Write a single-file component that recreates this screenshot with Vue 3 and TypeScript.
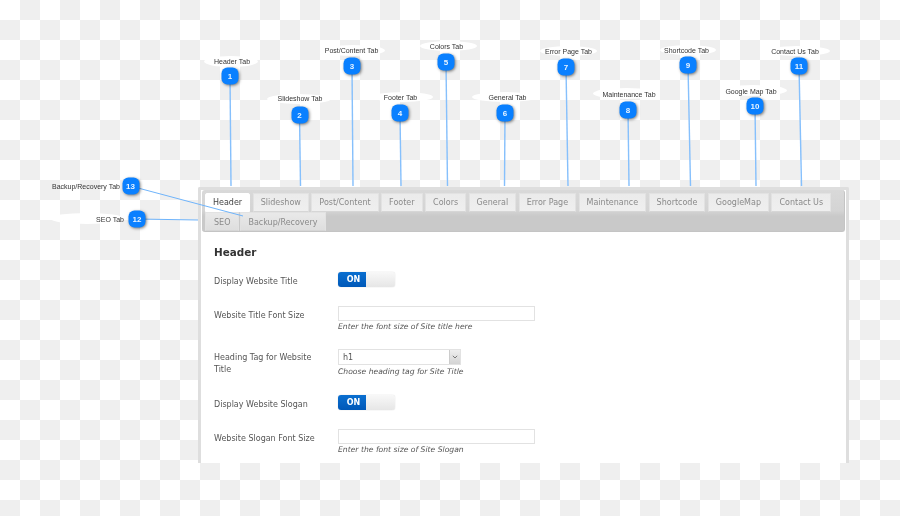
<script setup lang="ts">
interface Pin {
  n: number;
  label: string;
  x: number;
  y: number;
  textX: number;
  textY: number;
  cloud: [number, number, number, number];
  end: [number, number];
}

// pin coordinates are read off the annotated screenshot
const pins: Pin[] = [
  { n: 1, label: 'Header Tab', x: 230, y: 76, textX: 232, textY: 61, cloud: [204, 56, 54, 11], end: [231, 186] },
  { n: 2, label: 'Slideshow Tab', x: 299.5, y: 115, textX: 300, textY: 98, cloud: [267, 94, 64, 10], end: [300.5, 186] },
  { n: 3, label: 'Post/Content Tab', x: 352, y: 66, textX: 351.5, textY: 50, cloud: [322, 45, 63, 11], end: [353, 186] },
  { n: 4, label: 'Footer Tab', x: 400, y: 113, textX: 400.5, textY: 97, cloud: [372, 92, 61, 10], end: [401, 186] },
  { n: 5, label: 'Colors Tab', x: 446, y: 62, textX: 446.5, textY: 46, cloud: [420, 41, 57, 10], end: [447.5, 186] },
  { n: 6, label: 'General Tab', x: 505, y: 113, textX: 507.5, textY: 97, cloud: [472, 92, 66, 10], end: [504.5, 186] },
  { n: 7, label: 'Error Page Tab', x: 566, y: 67, textX: 568.5, textY: 51, cloud: [540, 46, 57, 10], end: [568, 186] },
  { n: 8, label: 'Maintenance Tab', x: 628, y: 110, textX: 629, textY: 94, cloud: [593, 88, 67, 11], end: [629, 186] },
  { n: 9, label: 'Shortcode Tab', x: 688, y: 65, textX: 686.5, textY: 50, cloud: [660, 45, 56, 10], end: [690.5, 186] },
  { n: 10, label: 'Google Map Tab', x: 755, y: 106, textX: 751, textY: 90.5, cloud: [720, 85, 67, 11], end: [756, 186] },
  { n: 11, label: 'Contact Us Tab', x: 799, y: 66, textX: 795, textY: 51, cloud: [765, 46, 65, 10], end: [801.5, 186] },
  { n: 12, label: 'SEO Tab', x: 137, y: 219, textX: 110, textY: 219, cloud: [50, 213, 74, 11], end: [198, 220] },
  { n: 13, label: 'Backup/Recovery Tab', x: 130.5, y: 186, textX: 86, textY: 186, cloud: [52, 186, 0, 0], end: [243, 216] },
];

const tabs: string[] = [
  'Header', 'Slideshow', 'Post/Content', 'Footer', 'Colors', 'General', 'Error Page',
  'Maintenance', 'Shortcode', 'GoogleMap', 'Contact Us', 'SEO', 'Backup/Recovery',
];
</script>

<template>
  <div class="page">
    <div class="panel">
      <div class="tab-bar">
        <span v-for="(t, i) in tabs" :key="t" class="tab" :class="{ active: i === 0 }">{{ t }}</span>
      </div>
      <div class="content">
        <h2 class="title">Header</h2>

        <div class="row first">
          <label class="lbl">Display Website Title</label>
          <div class="toggle"><span class="on">ON</span><span class="off"></span></div>
        </div>

        <div class="row">
          <label class="lbl">Website Title Font Size</label>
          <div>
            <input class="field" type="text" />
            <p class="hint">Enter the font size of Site title here</p>
          </div>
        </div>

        <div class="row tall">
          <label class="lbl">Heading Tag for Website Title</label>
          <div>
            <div class="select">
              <span class="sel-val">h1</span>
              <span class="sel-btn">
                <svg width="6" height="4" viewBox="0 0 6 4"><path d="M.8.8 3 3 5.2.8" fill="none" stroke="#777" stroke-width="1" /></svg>
              </span>
            </div>
            <p class="hint">Choose heading tag for Site Title</p>
          </div>
        </div>

        <div class="row after-tall">
          <label class="lbl">Display Website Slogan</label>
          <div class="toggle"><span class="on">ON</span><span class="off"></span></div>
        </div>

        <div class="row">
          <label class="lbl">Website Slogan Font Size</label>
          <div>
            <input class="field" type="text" />
            <p class="hint">Enter the font size of Site Slogan</p>
          </div>
        </div>
      </div>
    </div>

    <template v-for="p in pins" :key="'c' + p.n">
      <div
        class="cloud"
        :style="{ left: p.cloud[0] + 'px', top: p.cloud[1] + 'px', width: p.cloud[2] + 'px', height: p.cloud[3] + 'px' }"
      ></div>
    </template>

    <svg class="lines" width="900" height="516" viewBox="0 0 900 516">
      <line
        v-for="p in pins"
        :key="p.n"
        :x1="p.x"
        :y1="p.y"
        :x2="p.end[0]"
        :y2="p.end[1]"
        :stroke="p.n > 11 ? '#6fb4fb' : '#86c0fc'"
        :stroke-width="p.n > 11 ? 1 : 1.4"
      />
    </svg>

    <template v-for="p in pins" :key="'p' + p.n">
      <span class="pin-label" :style="{ left: p.textX + 'px', top: p.textY + 'px' }">{{ p.label }}</span>
      <span class="pin" :style="{ left: p.x + 'px', top: p.y + 'px' }">{{ p.n }}</span>
    </template>
  </div>
</template>

<style>
html,
body {
  margin: 0;
  background: #fff;
}
</style>

<style scoped>
.page {
  position: relative;
  width: 900px;
  height: 516px;
  box-sizing: border-box;
  padding: 187px 0 0 198px;
  overflow: hidden;
  filter: blur(0.35px);
  background-color: #fff;
  background-image: conic-gradient(#efefef 25%, #fff 0 50%, #efefef 0 75%, #fff 0);
  background-size: 40px 40px;
}
.panel {
  width: 651px;
  height: 276px;
  box-sizing: border-box;
  overflow: hidden;
  background: #fff;
  border: 3px solid #dedede;
  border-bottom: 0;
  border-radius: 2px 2px 0 0;
  font-family: "DejaVu Sans", Verdana, sans-serif;
}
.tab-bar {
  display: flex;
  flex-wrap: wrap;
  column-gap: 2.5px;
  align-content: flex-start;
  width: 643px;
  height: 42px;
  margin: 0 0 0 1px;
  box-sizing: border-box;
  padding: 3px 0 0 3px;
  border-radius: 3px;
  border: 1px solid #c4c4c4;
  border-width: 0 1px 1px 0;
  background: linear-gradient(#d9d9d9 0, #d4d4d4 50%, #c9c9c9 64%, #c9c9c9 100%);
}
.tab {
  height: 19px;
  box-sizing: border-box;
  padding: 0 7px;
  line-height: 18px;
  font-size: 8px;
  color: #8a8a8a;
  background: linear-gradient(#ebebeb, #efefef);
  border: 1px solid #e2e2e2;
  border-bottom-color: #d6d6d6;
  white-space: nowrap;
}
.tab.active {
  color: #444;
  background: #fff;
  border-color: #fff;
  border-radius: 2px 2px 0 0;
}
.tab:nth-child(n + 12) {
  line-height: 20px;
  background: linear-gradient(#e9e9e9, #dedede);
  margin-right: -1.5px;
}
.tab:nth-child(12) {
  padding: 0 8px;
}
.content {
  padding: 13px 0 0 13px;
}
.title {
  margin: 0;
  height: 14px;
  line-height: 14px;
  font-size: 10.4px;
  font-weight: 700;
  color: #333;
}
.row {
  display: grid;
  grid-template-columns: 124px 1fr;
  margin-top: 19px;
}
.row.first {
  margin-top: 13px;
}
.row.tall {
  margin-top: 17px;
}
.row.after-tall {
  margin-top: 18px;
}
.row.tall .lbl {
  padding-top: 3px;
}
.lbl {
  display: block;
  width: 108px;
  padding-top: 4px;
  margin-bottom: -4px;
  line-height: 12px;
  font-size: 8px;
  color: #555;
}
.toggle {
  display: flex;
  width: 57px;
  height: 15px;
  border-radius: 3px;
  overflow: hidden;
  box-shadow: 0 0 1px #bbb;
}
.on {
  width: 28px;
  box-sizing: border-box;
  padding-left: 3px;
  line-height: 15px;
  text-align: center;
  font-size: 8px;
  font-weight: 700;
  color: #fff;
  background: linear-gradient(#0a6fd0, #0058b8);
}
.off {
  flex: 1;
  background: linear-gradient(#f8f8f8, #e6e6e6);
}
.field {
  display: block;
  width: 197px;
  height: 15px;
  box-sizing: border-box;
  margin: 0;
  padding: 0;
  border: 1px solid #e2e2e2;
  background: #fff;
}
.hint {
  margin: 0;
  height: 11px;
  line-height: 11px;
  font-size: 7.65px;
  font-style: italic;
  color: #555;
}
.select {
  display: flex;
  width: 123px;
  height: 16px;
  box-sizing: border-box;
  border: 1px solid #e2e2e2;
  margin-bottom: 1px;
}
.sel-val {
  flex: 1;
  padding-left: 4px;
  line-height: 15px;
  font-size: 8px;
  color: #555;
}
.sel-btn {
  display: flex;
  align-items: center;
  justify-content: center;
  width: 10px;
  background: linear-gradient(#eee, #d4d4d4);
  border-left: 1px solid #ccc;
}
.cloud {
  position: absolute;
  background: #fff;
  border-radius: 50% / 50%;
}
.lines {
  position: absolute;
  left: 0;
  top: 0;
  pointer-events: none;
}
.pin-label {
  position: absolute;
  transform: translate(-50%, -50%);
  font-family: "Liberation Sans", Arial, sans-serif;
  font-size: 7px;
  line-height: 9px;
  color: #333;
  white-space: nowrap;
}
.pin {
  position: absolute;
  width: 17px;
  height: 17px;
  transform: translate(-50%, -50%);
  border-radius: 6px;
  background: #0a80ff;
  box-shadow: 1px 1px 3px rgba(0, 0, 0, 0.5);
  color: #e8f3ff;
  font-family: "Liberation Sans", Arial, sans-serif;
  font-size: 8px;
  font-weight: 700;
  line-height: 17px;
  text-align: center;
}
</style>
